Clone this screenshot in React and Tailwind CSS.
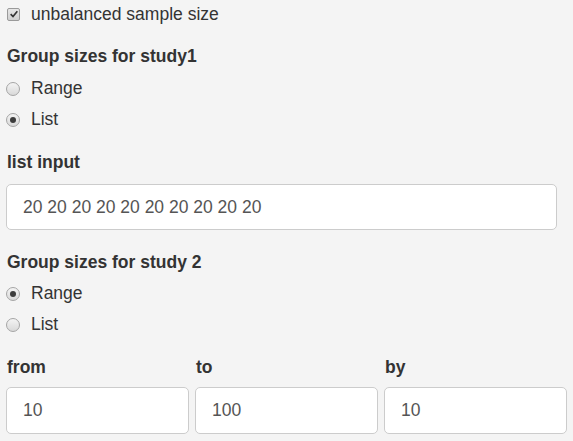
import React from 'react';

function Checkbox() {
  return (
    <span className="flex h-[13px] w-[13px] items-center justify-center rounded-[2px] border border-[#9a9a9a] bg-gradient-to-b from-[#e6e6e6] to-[#cfcfcf]">
      <svg viewBox="0 0 12 12" className="h-[10px] w-[10px]">
        <path d="M2 6.2 L4.8 9 L10 2.6" fill="none" stroke="#333" strokeWidth="2" />
      </svg>
    </span>
  );
}

function Radio({ checked }) {
  return (
    <span className="flex h-[14px] w-[14px] items-center justify-center rounded-full border border-[#a5a5a5] bg-gradient-to-b from-[#f4f4f4] to-[#d9d9d9]">
      {checked && <span className="h-[6px] w-[6px] rounded-full bg-[#3c3c3c]" />}
    </span>
  );
}

function RadioRow({ label, checked }) {
  return (
    <div className="flex h-[31px] items-center">
      <div className="ml-[6px] w-[25px]">
        <Radio checked={checked} />
      </div>
      <span>{label}</span>
    </div>
  );
}

function Field({ value, className }) {
  return (
    <div className={`flex items-center rounded-[5px] border border-[#cccccc] bg-white pl-[16px] text-[#555555] ${className}`}>
      {value}
    </div>
  );
}

export default function App() {
  return (
    <div
      className="h-[441px] w-[573px] overflow-hidden bg-[#f4f4f4] text-[17.5px] leading-[25px] text-[#333333]"
      style={{ fontFamily: '"Liberation Sans", Arial, sans-serif' }}
    >
      <div className="flex h-[28px] items-center">
        <div className="ml-[7px] w-[24px]">
          <Checkbox />
        </div>
        <span>unbalanced sample size</span>
      </div>

      <div className="ml-[7px] mt-[16px] h-[25px] font-bold">Group sizes for study1</div>
      <div className="mt-[4px]">
        <RadioRow label="Range" />
        <RadioRow label="List" checked />
      </div>

      <div className="ml-[7px] mt-[15px] h-[25px] font-bold">list input</div>
      <Field value="20 20 20 20 20 20 20 20 20 20" className="ml-[6px] mt-[9px] h-[46px] w-[551px]" />

      <div className="ml-[7px] mt-[20px] h-[25px] font-bold">Group sizes for study 2</div>
      <div className="mt-[3px]">
        <RadioRow label="Range" checked />
        <RadioRow label="List" />
      </div>

      <div className="ml-[6px] mt-[15px] grid grid-cols-[183px_183px_183px] gap-x-[6px]">
        {[
          ['from', '10'],
          ['to', '100'],
          ['by', '10'],
        ].map(([label, value]) => (
          <div key={label}>
            <div className="ml-[1px] h-[25px] font-bold">{label}</div>
            <Field value={value} className="mt-[7px] h-[47px]" />
          </div>
        ))}
      </div>
    </div>
  );
}
